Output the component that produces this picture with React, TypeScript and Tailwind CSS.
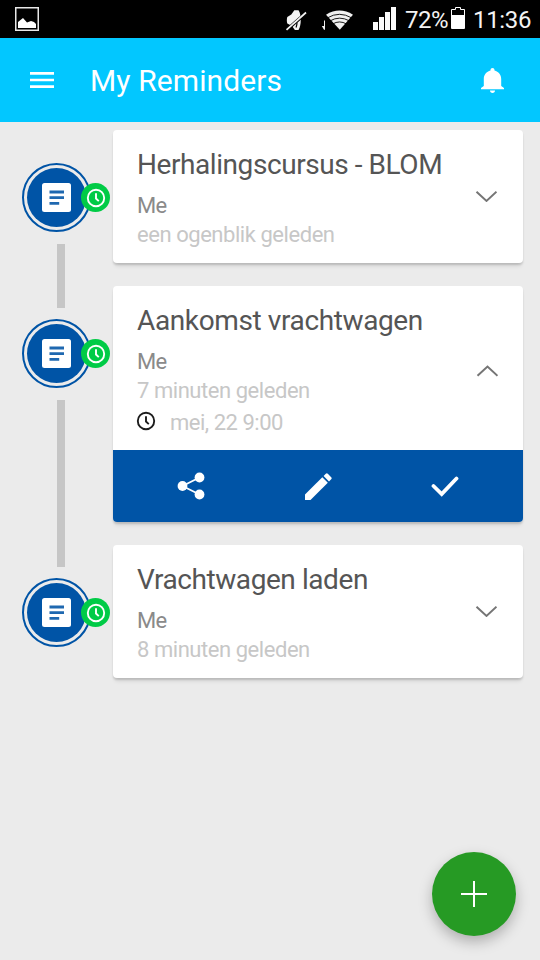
import React from "react";

type Reminder = {
  title: string;
  titleSpacing: string;
  author: string;
  ago: string;
  due?: string;
  open?: boolean;
};

const reminders: Reminder[] = [
  { title: "Herhalingscursus - BLOM", titleSpacing: "tracking-[-0.43px]", author: "Me", ago: "een ogenblik geleden" },
  { title: "Aankomst vrachtwagen", titleSpacing: "tracking-[-0.38px]", author: "Me", ago: "7 minuten geleden", due: "mei, 22 9:00", open: true },
  { title: "Vrachtwagen laden", titleSpacing: "tracking-[-0.43px]", author: "Me", ago: "8 minuten geleden" },
];

function StatusBar() {
  return (
    <div className="flex h-[38px] items-start bg-black text-[#f3f3f3]">
      <svg className="mt-[7px] ml-[15px] h-6 w-6" viewBox="0 0 24 24" fill="none">
        <rect x="0.75" y="0.75" width="22.5" height="22.5" stroke="#e8e8e8" strokeWidth="1.5" />
        <path d="M3 21v-6l5-4 4 4.500 4-1.500 3 1 2 2v4z" fill="#fff" />
      </svg>
      <svg className="mt-[9px] ml-[246px] h-[22px] w-[22px]" viewBox="0 0 22 22">
        <path d="M2.300 8l4-2.500 3-4.200h4.200c3 4 3 15.500 0 19.600h-3.600L7 17l-4.700-2.500c-.6-2-.6-4.500 0-6.500z" fill="#f4f4f4" />
        <path d="M12 13.500c0 2-.3 3.500-1 5" fill="none" stroke="#000" strokeWidth="1.200" />
        <path d="M0.500 22L21 4" stroke="#000" strokeWidth="3.200" />
        <path d="M1.500 20.800L21 3.500" stroke="#f4f4f4" strokeWidth="1.700" />
      </svg>
      <svg className="mt-[8px] ml-[14px] h-[23px] w-8" viewBox="0 0 32 23">
        <path d="M4 12.500v9.200H3L0.800 18H3v-5.500z" fill="#f0f0f0" />
        <path d="M5 6.700Q18.500-1.500 32 6.700L18.800 21.800z" fill="#f0f0f0" />
        <path d="M6.500 9.800Q18.500 2.800 30.500 9.800M9 12.900Q18.500 7.400 28.500 12.900M11.500 16Q18.700 11.900 25.500 16" fill="none" stroke="#000" strokeWidth="0.9" />
      </svg>
      <div className="mt-[7px] ml-[20px] flex h-[23px] items-end gap-px">
        <div className="h-2 w-[5px] bg-[#fafafa]" />
        <div className="h-[13px] w-[5px] bg-[#fafafa]" />
        <div className="h-[18px] w-[5px] bg-[#fafafa]" />
        <div className="h-[23px] w-[5px] bg-[#fafafa]" />
      </div>
      <span className="mt-[6px] ml-[9px] w-[46px] whitespace-nowrap text-[24px] leading-7 tracking-[-0.5px]">72%</span>
      <svg className="mt-[7px] h-[22px] w-[14px]" viewBox="0 0 14 22">
        <path d="M0.500 21.500v-19h4v-2h5v2h4v19z" fill="#000" stroke="#fff" />
        <path d="M1 8h12v13H1z" fill="#fff" />
      </svg>
      <span className="mt-[6px] ml-[8px] whitespace-nowrap text-[24px] leading-7 tracking-[-0.35px]">11:36</span>
    </div>
  );
}

function Header() {
  return (
    <header className="flex h-[84px] items-center bg-[#02c7ff] text-white">
      <svg className="ml-[30px] h-4 w-6" viewBox="0 0 24 16" fill="#fff">
        <path d="M0 0h24v2.670H0zM0 6.670h24v2.660H0zM0 13.330h24V16H0z" />
      </svg>
      <h1 className="ml-[36px] flex-1 whitespace-nowrap pt-[2px] text-[30px] leading-9 tracking-[0.1px]">My Reminders</h1>
      <svg className="mr-[36px] h-[25px] w-[23px]" viewBox="0 0 23 25" fill="#fff">
        <path d="M11.500 0c-1.200 0-2 .8-2 2v.5C5.500 3.400 2.800 7 2.800 11v7L0 20v1.200h23V20l-2.800-2v-7c0-4-2.700-7.600-6.700-8.500V2c0-1.200-.8-2-2-2z" />
        <path d="M9 22.500h5c0 1.400-1 2.500-2.500 2.500S9 23.900 9 22.500z" />
      </svg>
    </header>
  );
}

function Clock({ className }: { className: string }) {
  return (
    <svg className={className} viewBox="0 0 20 20" fill="none" stroke="currentColor" strokeWidth="1.900">
      <circle cx="10" cy="10" r="8.200" />
      <path d="M10 5.200v5.300l2.800 2.600" />
    </svg>
  );
}

function Marker() {
  return (
    <div className="relative ml-[22px] h-[69px] w-[69px] shrink-0 rounded-full border-2 border-[#0054a6] p-[3px]">
      <div className="flex h-full w-full items-center justify-center rounded-full bg-[#0054a6]">
        <svg className="mr-px mb-px h-[29px] w-[29px]" viewBox="0 0 29 29">
          <rect width="29" height="29" rx="2.500" fill="#fff" />
          <path d="M7.500 9h14.500M7.500 14.700h14.500M7.500 20.300h9.700" stroke="#1f68b0" strokeWidth="2.800" />
        </svg>
      </div>
      <div className="absolute top-[18px] left-[57px] flex h-[29px] w-[29px] items-center justify-center rounded-full bg-[#00cb46] text-white">
        <Clock className="h-5 w-5" />
      </div>
    </div>
  );
}

function Actions() {
  return (
    <div className="flex h-[72px] items-center rounded-b-[4px] bg-[#0054a6] pl-[64px]">
      <svg className="h-[28px] w-[28px]" viewBox="0 0 28 28" fill="#fff">
        <path d="M5.500 14L22.500 5.500M5.500 14l17 8.500" stroke="#fff" strokeWidth="1.900" />
        <circle cx="5.500" cy="14" r="4.900" />
        <circle cx="22.500" cy="5.500" r="4.900" />
        <circle cx="22.500" cy="22.500" r="4.900" />
      </svg>
      <svg className="mt-px ml-[99px] h-[28px] w-[28px]" viewBox="0 0 28 28" fill="#fff">
        <path d="M1 21.500L18.300 4.300l5.500 5.500L6.500 27H1z" />
        <path d="M19.600 3l2.200-2.200q1-1 2 0l3.400 3.400q1 1 0 2l-2.200 2.200z" />
      </svg>
      <svg className="mt-px ml-[99px] h-[28px] w-[28px]" viewBox="0 0 28 28" fill="none">
        <path d="M2.500 13l8.200 8L25.500 5.500" stroke="#fff" strokeWidth="3.800" strokeLinecap="round" />
      </svg>
    </div>
  );
}

function Card({ item }: { item: Reminder }) {
  return (
    <article className="w-[410px] rounded-[4px] bg-white shadow-[0_2px_2px_rgba(0,0,0,0.13),0_5px_4px_-2px_rgba(0,0,0,0.1)]">
      <div className={`flex pl-6 ${item.open ? "h-[164px]" : "h-[133px]"}`}>
        <div className="w-[338px] whitespace-nowrap pt-[18px] text-[22px] leading-[29px]">
          <h2 className={`mb-[9px] text-[28px] leading-[34px] text-[#555] ${item.titleSpacing}`}>{item.title}</h2>
          <p className="tracking-[-0.8px] text-[#8a8a8a]">{item.author}</p>
          <p className="tracking-[-0.45px] text-[#c7c7c7]">{item.ago}</p>
          {item.due && (
            <div className="mt-[3px] flex text-[#c7c7c7]">
              <Clock className="mt-[3px] -ml-px mr-[14px] h-5 w-5 text-[#1c1c1c]" />
              <span className="tracking-[-0.48px]">{item.due}</span>
            </div>
          )}
        </div>
        <svg className={`h-[12px] w-[22px] ${item.open ? "mt-[79px] ml-[1px]" : "mt-[60px]"}`} viewBox="0 0 22 12" fill="none">
          <path d={item.open ? "M1.500 10.800l10-9.200 10 9.200" : "M1.500 1.700l10 9.200 10-9.200"} stroke="#757575" strokeWidth="2" />
        </svg>
      </div>
      {item.open && <Actions />}
    </article>
  );
}

export default function App() {
  return (
    <div className="relative flex h-[960px] w-[540px] flex-col overflow-hidden bg-[#ebebeb] font-[Roboto,sans-serif]">
      <StatusBar />
      <Header />
      <main className="flex flex-col gap-[23px] pt-2">
        {reminders.map((item, i) => (
          <section key={item.title} className="flex">
            <div className="flex w-[113px] flex-col pt-[33px]">
              <Marker />
              {i < reminders.length - 1 && <div className="mt-3 -mb-[45px] ml-[57px] w-2 flex-1 bg-[#c6c6c6]" />}
            </div>
            <Card item={item} />
          </section>
        ))}
      </main>
      <button aria-label="Add" className="absolute top-[852px] left-[432px] flex h-[84px] w-[84px] items-center justify-center rounded-full bg-[#269a24] shadow-[0_6px_14px_rgba(0,0,0,0.26)]">
        <svg className="h-[26px] w-[26px]" viewBox="0 0 26 26" stroke="#fff" strokeWidth="2">
          <path d="M13 0v26M0 13h26" />
        </svg>
      </button>
    </div>
  );
}
